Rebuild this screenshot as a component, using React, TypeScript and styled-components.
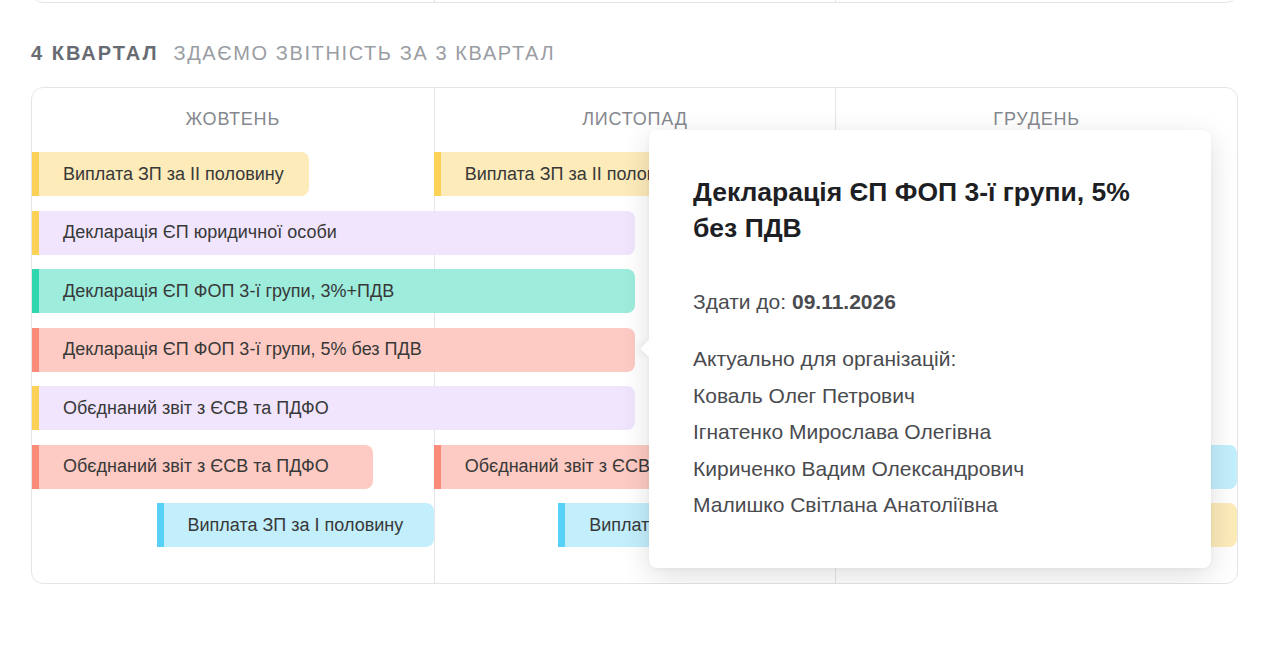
import styled, { createGlobalStyle } from "styled-components";

type Tone = "yellow" | "purple" | "green" | "salmon" | "blue";

interface Bar {
  start: number; // in 1/100 of a month
  len: number;
  tone: Tone;
  title: string;
}

const TONES: Record<Tone, { bg: string; stripe: string }> = {
  yellow: { bg: "#fdebba", stripe: "#fbd257" },
  purple: { bg: "#f0e5fd", stripe: "#fbd257" },
  green: { bg: "#9decdc", stripe: "#30d6ad" },
  salmon: { bg: "#fdcbc3", stripe: "#f98b78" },
  blue: { bg: "#c3effd", stripe: "#58d1f8" },
};

const MONTHS = ["Жовтень", "Листопад", "Грудень"];

const ROWS: Bar[][] = [
  [
    { start: 0, len: 69, tone: "yellow", title: "Виплата ЗП за II половину" },
    { start: 100, len: 69, tone: "yellow", title: "Виплата ЗП за II половину" },
  ],
  [{ start: 0, len: 150, tone: "purple", title: "Декларація ЄП юридичної особи" }],
  [{ start: 0, len: 150, tone: "green", title: "Декларація ЄП ФОП 3-ї групи, 3%+ПДВ" }],
  [{ start: 0, len: 150, tone: "salmon", title: "Декларація ЄП ФОП 3-ї групи, 5% без ПДВ" }],
  [{ start: 0, len: 150, tone: "purple", title: "Обєднаний звіт з ЄСВ та ПДФО" }],
  [
    { start: 0, len: 85, tone: "salmon", title: "Обєднаний звіт з ЄСВ та ПДФО" },
    { start: 100, len: 85, tone: "salmon", title: "Обєднаний звіт з ЄСВ та ПДФО" },
    { start: 231, len: 69, tone: "blue", title: "Виплата ЗП за I половину" },
  ],
  [
    { start: 31, len: 69, tone: "blue", title: "Виплата ЗП за I половину" },
    { start: 131, len: 69, tone: "blue", title: "Виплата ЗП за I половину" },
    { start: 200, len: 100, tone: "yellow", title: "Виплата ЗП за II половину" },
  ],
];

const ORGS = [
  "Коваль Олег Петрович",
  "Ігнатенко Мирослава Олегівна",
  "Кириченко Вадим Олександрович",
  "Малишко Світлана Анатоліївна",
];

const App = () => {
  return (
    <>
      <GlobalStyle />
      <StPage>
        <StPrevCard>
          <StPrevCol />
          <StPrevCol $divider />
          <StPrevCol $divider />
        </StPrevCard>

        <StHeading>
          <b>4 квартал</b>
          <span>здаємо звітність за 3 квартал</span>
        </StHeading>

        <StCard>
          <StTimeline>
            {MONTHS.map((m, i) => (
              <StMonth key={m} $index={i}>
                {m}
              </StMonth>
            ))}
            {ROWS.map((row, r) =>
              row.map((bar, b) => (
                <StBar
                  key={`${r}_${b}`}
                  $row={r + 2}
                  $start={bar.start}
                  $len={bar.len}
                  $tone={bar.tone}
                >
                  {bar.title}
                </StBar>
              ))
            )}
          </StTimeline>

          <StTooltip>
            <StTipTitle>Декларація ЄП ФОП 3-ї групи, 5% без ПДВ</StTipTitle>
            <StTipDue>
              Здати до: <b>09.11.2026</b>
            </StTipDue>
            <StTipList>
              <li>Актуально для організацій:</li>
              {ORGS.map((o) => (
                <li key={o}>{o}</li>
              ))}
            </StTipList>
          </StTooltip>
        </StCard>
      </StPage>
    </>
  );
};

export default App;

const GlobalStyle = createGlobalStyle`
  * { box-sizing: border-box; }
  body {
    margin: 0;
    background: #fff;
    font-family: "Liberation Sans", Arial, sans-serif;
    overflow: hidden;
  }
`;

const StPage = styled.div`
  width: 1207px;
  margin-left: 31px;
`;

const StPrevCard = styled.div`
  display: grid;
  grid-template-columns: repeat(3, 1fr);
  height: 100px;
  margin-top: -97px;
  border: 1px solid #e3e5e8;
  border-radius: 12px;
  overflow: hidden;
`;

const StPrevCol = styled.div<{ $divider?: boolean }>`
  border-left: ${({ $divider }) => ($divider ? "1px solid #e3e5e8" : "none")};
`;

const StHeading = styled.h2`
  display: flex;
  align-items: center;
  gap: 15px;
  margin: 38px 0 22px;
  height: 24px;
  font-size: 20px;
  line-height: 24px;
  font-weight: 400;
  text-transform: uppercase;
  letter-spacing: 1.6px;

  b {
    color: #686b72;
    font-weight: 700;
    letter-spacing: 2px;
  }

  span {
    color: #9a9da3;
  }
`;

const StCard = styled.div`
  position: relative;
  border: 1px solid #e3e5e8;
  border-radius: 12px;
`;

const StTimeline = styled.div`
  display: grid;
  grid-template-columns: repeat(300, minmax(0, 1fr));
  grid-template-rows: 49.5px repeat(7, 44px) 21.5px;
  row-gap: 14.5px;
  border-radius: 12px;
  overflow: hidden;
`;

const StMonth = styled.div<{ $index: number }>`
  grid-row: 1 / -1;
  grid-column: ${({ $index }) => `${$index * 100 + 1} / span 100`};
  padding-top: 22px;
  border-left: ${({ $index }) => ($index ? "1px solid #e3e5e8" : "none")};
  text-align: center;
  font-size: 18px;
  line-height: 18px;
  color: #85888e;
  text-transform: uppercase;
  letter-spacing: 0.8px;
`;

const StBar = styled.div<{ $row: number; $start: number; $len: number; $tone: Tone }>`
  grid-row: ${({ $row }) => $row};
  grid-column: ${({ $start, $len }) => `${$start + 1} / span ${$len}`};
  display: flex;
  align-items: center;
  min-width: 0;
  padding-left: 24px;
  overflow: hidden;
  white-space: nowrap;

  background: ${({ $tone }) => TONES[$tone].bg};
  border-left: 7px solid ${({ $tone }) => TONES[$tone].stripe};
  border-radius: 0 8px 8px 0;

  font-size: 18px;
  color: #383838;
`;

const StTooltip = styled.div`
  position: absolute;
  left: 617px;
  top: 42px;
  width: 562px;
  height: 438px;
  padding: 44px 44px 0;

  background: #fff;
  border-radius: 8px;
  box-shadow: 0 8px 30px rgba(0, 0, 0, 0.13), 0 1px 4px rgba(0, 0, 0, 0.04);

  &::before {
    content: "";
    position: absolute;
    left: -6px;
    top: 212px;
    width: 13px;
    height: 13px;
    background: #fff;
    transform: rotate(45deg);
    box-shadow: -3px 3px 6px rgba(0, 0, 0, 0.05);
  }
`;

const StTipTitle = styled.div`
  margin-bottom: 38px;
  font-size: 26.5px;
  line-height: 36px;
  font-weight: 700;
  color: #1e1f24;
`;

const StTipDue = styled.div`
  margin-bottom: 21px;
  font-size: 21px;
  line-height: 36px;
  color: #4a4b4f;

  b {
    font-weight: 700;
  }
`;

const StTipList = styled.ul`
  margin: 0;
  padding: 0;
  list-style: none;

  li {
    font-size: 21px;
    line-height: 36.5px;
    color: #4a4b4f;
  }
`;
